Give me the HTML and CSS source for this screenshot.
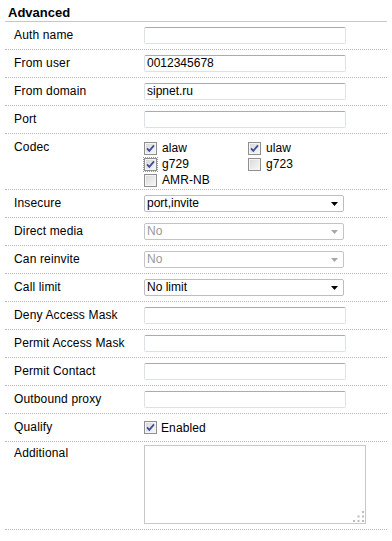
FILE: index.html
```html
<!DOCTYPE html>
<html>
<head>
<meta charset="utf-8">
<link rel="stylesheet" href="styles.css">
</head>
<body>
<div class="panel">
  <div class="title">Advanced</div>

  <div class="row"><div class="label">Auth name</div><div class="text"></div></div>
  <div class="row"><div class="label">From user</div><div class="text">0012345678</div></div>
  <div class="row"><div class="label">From domain</div><div class="text">sipnet.ru</div></div>
  <div class="row"><div class="label">Port</div><div class="text"></div></div>

  <div class="row codec">
    <div class="label">Codec</div>
    <div class="checks">
      <div class="chk"><span class="box"><svg width="11" height="11" viewBox="0 0 11 11"><path d="M2 5.3 L4.3 7.8 L9 2.3" fill="none" stroke="#3d4f9c" stroke-width="1.8"/></svg></span>alaw</div>
      <div class="chk"><span class="box"><svg width="11" height="11" viewBox="0 0 11 11"><path d="M2 5.3 L4.3 7.8 L9 2.3" fill="none" stroke="#3d4f9c" stroke-width="1.8"/></svg></span>ulaw</div>
      <div class="chk"><span class="box focus"><svg width="11" height="11" viewBox="0 0 11 11"><path d="M2 5.3 L4.3 7.8 L9 2.3" fill="none" stroke="#3d4f9c" stroke-width="1.8"/></svg></span>g729</div>
      <div class="chk"><span class="box"></span>g723</div>
      <div class="chk"><span class="box"></span>AMR-NB</div>
    </div>
  </div>

  <div class="row"><div class="label">Insecure</div><div class="select"><span>port,invite</span><svg width="7" height="4" viewBox="0 0 7 4"><path d="M0 0 H7 L3.5 4 Z" fill="#000"/></svg></div></div>
  <div class="row"><div class="label">Direct media</div><div class="select disabled"><span>No</span><svg width="7" height="4" viewBox="0 0 7 4"><path d="M0 0 H7 L3.5 4 Z" fill="#a8a8a8"/></svg></div></div>
  <div class="row"><div class="label">Can reinvite</div><div class="select disabled"><span>No</span><svg width="7" height="4" viewBox="0 0 7 4"><path d="M0 0 H7 L3.5 4 Z" fill="#a8a8a8"/></svg></div></div>
  <div class="row"><div class="label">Call limit</div><div class="select"><span>No limit</span><svg width="7" height="4" viewBox="0 0 7 4"><path d="M0 0 H7 L3.5 4 Z" fill="#000"/></svg></div></div>

  <div class="row"><div class="label">Deny Access Mask</div><div class="text"></div></div>
  <div class="row"><div class="label">Permit Access Mask</div><div class="text"></div></div>
  <div class="row"><div class="label">Permit Contact</div><div class="text"></div></div>
  <div class="row"><div class="label">Outbound proxy</div><div class="text"></div></div>

  <div class="row"><div class="label">Qualify</div><div class="chk single"><span class="box"><svg width="11" height="11" viewBox="0 0 11 11"><path d="M2 5.3 L4.3 7.8 L9 2.3" fill="none" stroke="#3d4f9c" stroke-width="1.8"/></svg></span>Enabled</div></div>

  <div class="row additional">
    <div class="label">Additional</div>
    <div class="area"><svg width="11" height="11" viewBox="0 0 11 11"><g fill="#bdbdbd"><rect x="9" y="0" width="2" height="2"/><rect x="4.5" y="4.5" width="2" height="2"/><rect x="9" y="4.5" width="2" height="2"/><rect x="0" y="9" width="2" height="2"/><rect x="4.5" y="9" width="2" height="2"/><rect x="9" y="9" width="2" height="2"/></g></svg></div>
  </div>
</div>
</body>
</html>
```

FILE: styles.css
```css
html, body {
  margin: 0;
  padding: 0;
  background: #fff;
}
body {
  font-family: "Liberation Sans", Arial, sans-serif;
  font-size: 12px;
  color: #000;
}
.panel {
  margin: 0 5px;
  width: 382px;
}
.title {
  font-weight: bold;
  font-size: 13px;
  line-height: 16px;
  height: 16px;
  padding: 5px 0 0 3px;
  border-bottom: 1px solid #c8c8c8;
}
.row {
  display: flex;
  align-items: flex-start;
  padding: 5px 0 5px 9px;
  border-bottom: 1px dotted #b8b8b8;
}
.label {
  width: 130px;
  flex: none;
  line-height: 13px;
  padding-top: 2px;
  letter-spacing: 0.15px;
}
.text {
  box-sizing: border-box;
  width: 202px;
  height: 17px;
  border: 1px solid #dde1e6;
  border-top-color: #a9abb0;
  border-radius: 2px;
  padding: 0 2px;
  line-height: 15px;
  font-size: 12px;
}
.select {
  box-sizing: border-box;
  width: 200px;
  height: 17px;
  border: 1px solid #bdbdbd;
  border-radius: 2px;
  padding: 0 5px 0 2px;
  line-height: 15px;
  display: flex;
  align-items: center;
  justify-content: space-between;
}
.select.disabled {
  color: #999;
  border-color: #c4c4c4;
}
.codec {
  padding-top: 6px;
  padding-bottom: 1px;
}
.codec .label {
  padding-top: 1px;
}
.checks {
  display: grid;
  grid-template-columns: 104px 104px;
}
.chk {
  display: flex;
  align-items: center;
  gap: 5px;
  height: 16px;
  line-height: 16px;
  letter-spacing: 0.1px;
}
.chk.single {
  height: 17px;
  gap: 4px;
}
.box {
  box-sizing: border-box;
  width: 13px;
  height: 13px;
  flex: none;
  border: 1px solid #8f8f8f;
  background: linear-gradient(135deg, #d6d6d6 0%, #ececec 60%, #f8f8f8 100%);
  box-shadow: inset 0 0 0 1px #f4f4f4;
  display: flex;
  align-items: center;
  justify-content: center;
}
.box.focus {
  outline: 1px dotted #9a9a9a;
  outline-offset: 0;
}
.additional {
  padding-top: 3px;
  padding-bottom: 5px;
}
.additional .label {
  padding-top: 2px;
  line-height: 13px;
}
.area {
  box-sizing: border-box;
  width: 222px;
  height: 79px;
  border: 1px solid #c8c8c8;
  display: flex;
  align-items: flex-end;
  justify-content: flex-end;
  padding: 0 1px 1px 0;
}
.area svg {
  display: block;
}
```
